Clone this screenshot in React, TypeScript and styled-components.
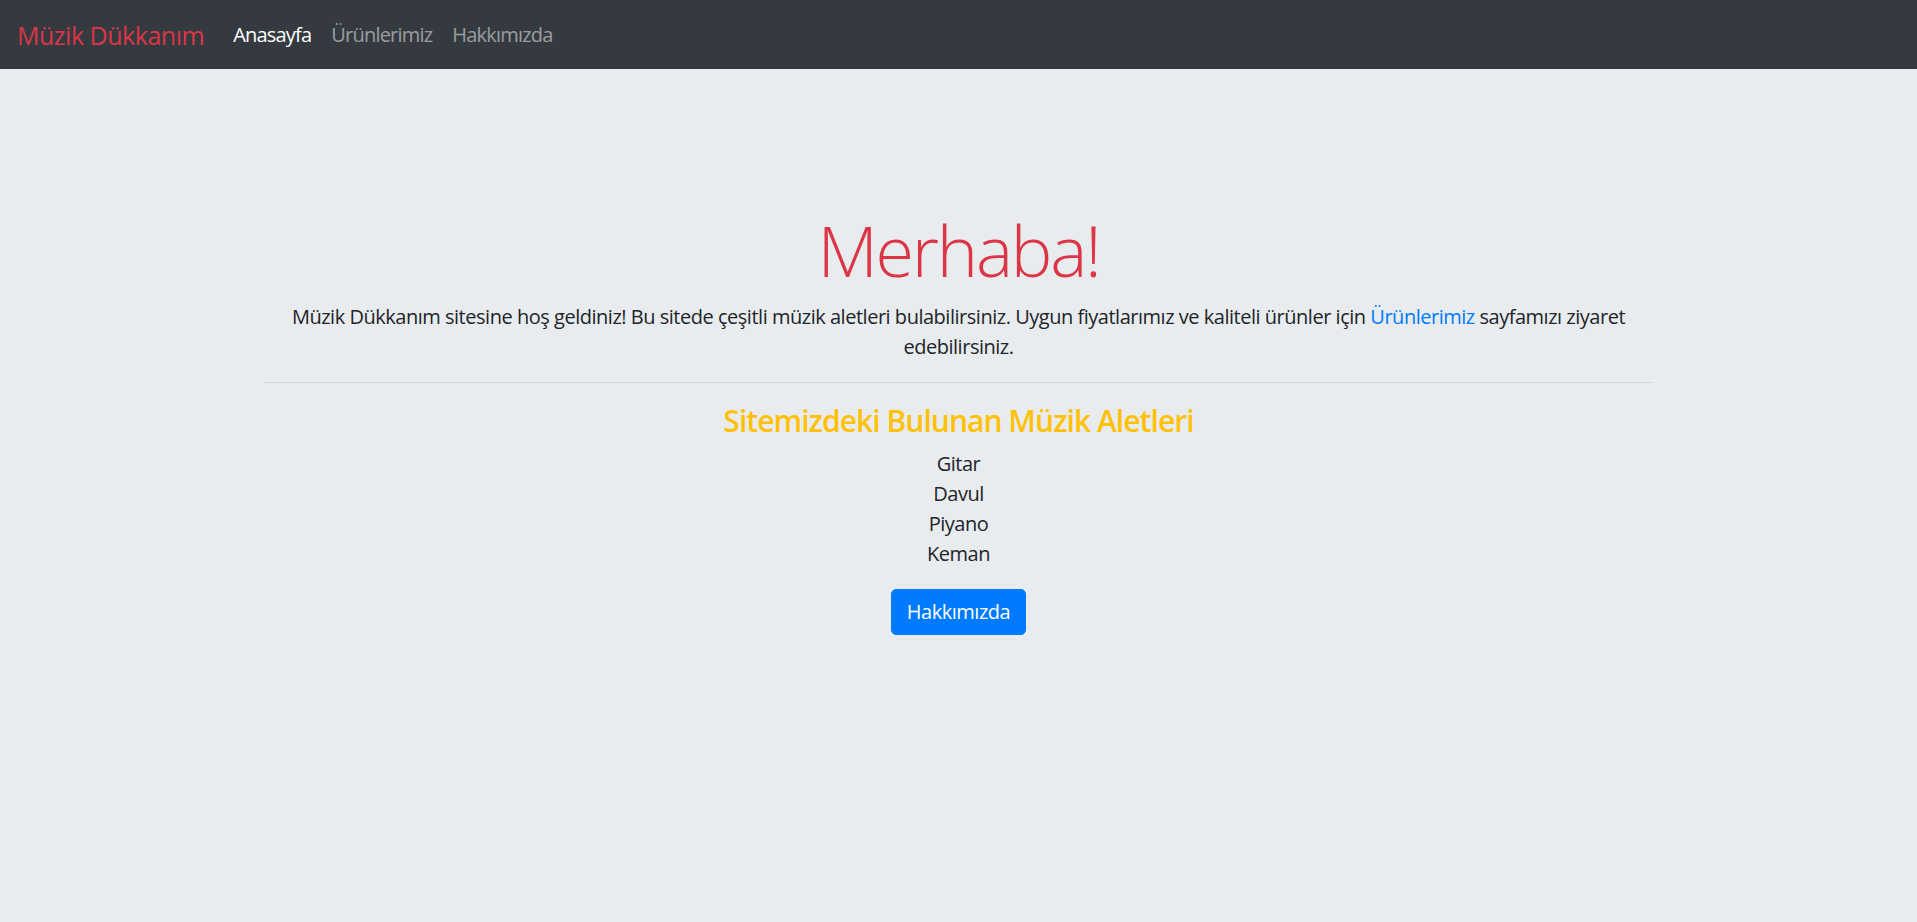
import React from "react";
import styled, { createGlobalStyle } from "styled-components";

const GlobalStyle = createGlobalStyle`
  html, body {
    margin: 0;
    padding: 0;
    background: #e9ecef;
    font-family: "Open Sans", "Noto Sans", "Liberation Sans", sans-serif;
    letter-spacing: -0.03em;
    color: #212529;
    min-height: 100%;
  }
  * { box-sizing: border-box; }
`;

const Navbar = styled.nav`
  display: flex;
  align-items: center;
  height: 69px;
  padding: 0 17px;
  background: #343a40;
`;

const Brand = styled.a`
  color: #dc3545;
  font-size: 25px;
  line-height: 36px;
  margin-right: 19px;
  text-decoration: none;
  white-space: nowrap;
`;

const NavList = styled.div`
  display: flex;
  align-items: center;
`;

const NavLink = styled.a<{ $active?: boolean }>`
  padding: 0 10px;
  font-size: 20px;
  line-height: 30px;
  letter-spacing: -0.04em;
  color: ${(p) => (p.$active ? "#ffffff" : "rgba(255,255,255,0.5)")};
  text-decoration: none;
  white-space: nowrap;
`;

const Main = styled.main`
  padding-top: 139px;
  display: flex;
  justify-content: center;
`;

const Container = styled.div`
  width: 1388px;
  text-align: center;
`;

const Display = styled.h1`
  margin: 0 0 10px;
  font-size: 70px;
  font-weight: 300;
  line-height: 84px;
  letter-spacing: -0.032em;
  color: #dc3545;
`;

const Lead = styled.p`
  margin: 0 0 20px;
  font-size: 20px;
  line-height: 30px;
`;

const Link = styled.a`
  color: #007bff;
  text-decoration: none;
`;

const Rule = styled.hr`
  margin: 0 0 20px;
  border: 0;
  border-top: 1px solid rgba(0, 0, 0, 0.1);
`;

const SectionTitle = styled.h4`
  margin: 0 0 10px;
  font-size: 30px;
  font-weight: 600;
  line-height: 36px;
  letter-spacing: -0.032em;
  color: #ffc107;
`;

const ItemList = styled.ul`
  list-style: none;
  margin: 0 0 20px;
  padding: 0;
`;

const Item = styled.li`
  font-size: 20px;
  line-height: 30px;
`;

const Button = styled.a`
  display: inline-block;
  padding: 7px 15px;
  font-size: 20px;
  line-height: 30px;
  color: #fff;
  background: #007bff;
  border: 1px solid #007bff;
  border-radius: 5px;
  text-decoration: none;
`;

const items = ["Gitar", "Davul", "Piyano", "Keman"];

export default function App() {
  return (
    <>
      <GlobalStyle />
      <Navbar>
        <Brand href="#">Müzik Dükkanım</Brand>
        <NavList>
          <NavLink href="#" $active>
            Anasayfa
          </NavLink>
          <NavLink href="#">Ürünlerimiz</NavLink>
          <NavLink href="#">Hakkımızda</NavLink>
        </NavList>
      </Navbar>
      <Main>
        <Container>
          <Display>Merhaba!</Display>
          <Lead>
            Müzik Dükkanım sitesine hoş geldiniz! Bu sitede çeşitli müzik aletleri bulabilirsiniz. Uygun
            fiyatlarımız ve kaliteli ürünler için <Link href="#">Ürünlerimiz</Link> sayfamızı ziyaret
            edebilirsiniz.
          </Lead>
          <Rule />
          <SectionTitle>Sitemizdeki Bulunan Müzik Aletleri</SectionTitle>
          <ItemList>
            {items.map((i) => (
              <Item key={i}>{i}</Item>
            ))}
          </ItemList>
          <Button href="#">Hakkımızda</Button>
        </Container>
      </Main>
    </>
  );
}
